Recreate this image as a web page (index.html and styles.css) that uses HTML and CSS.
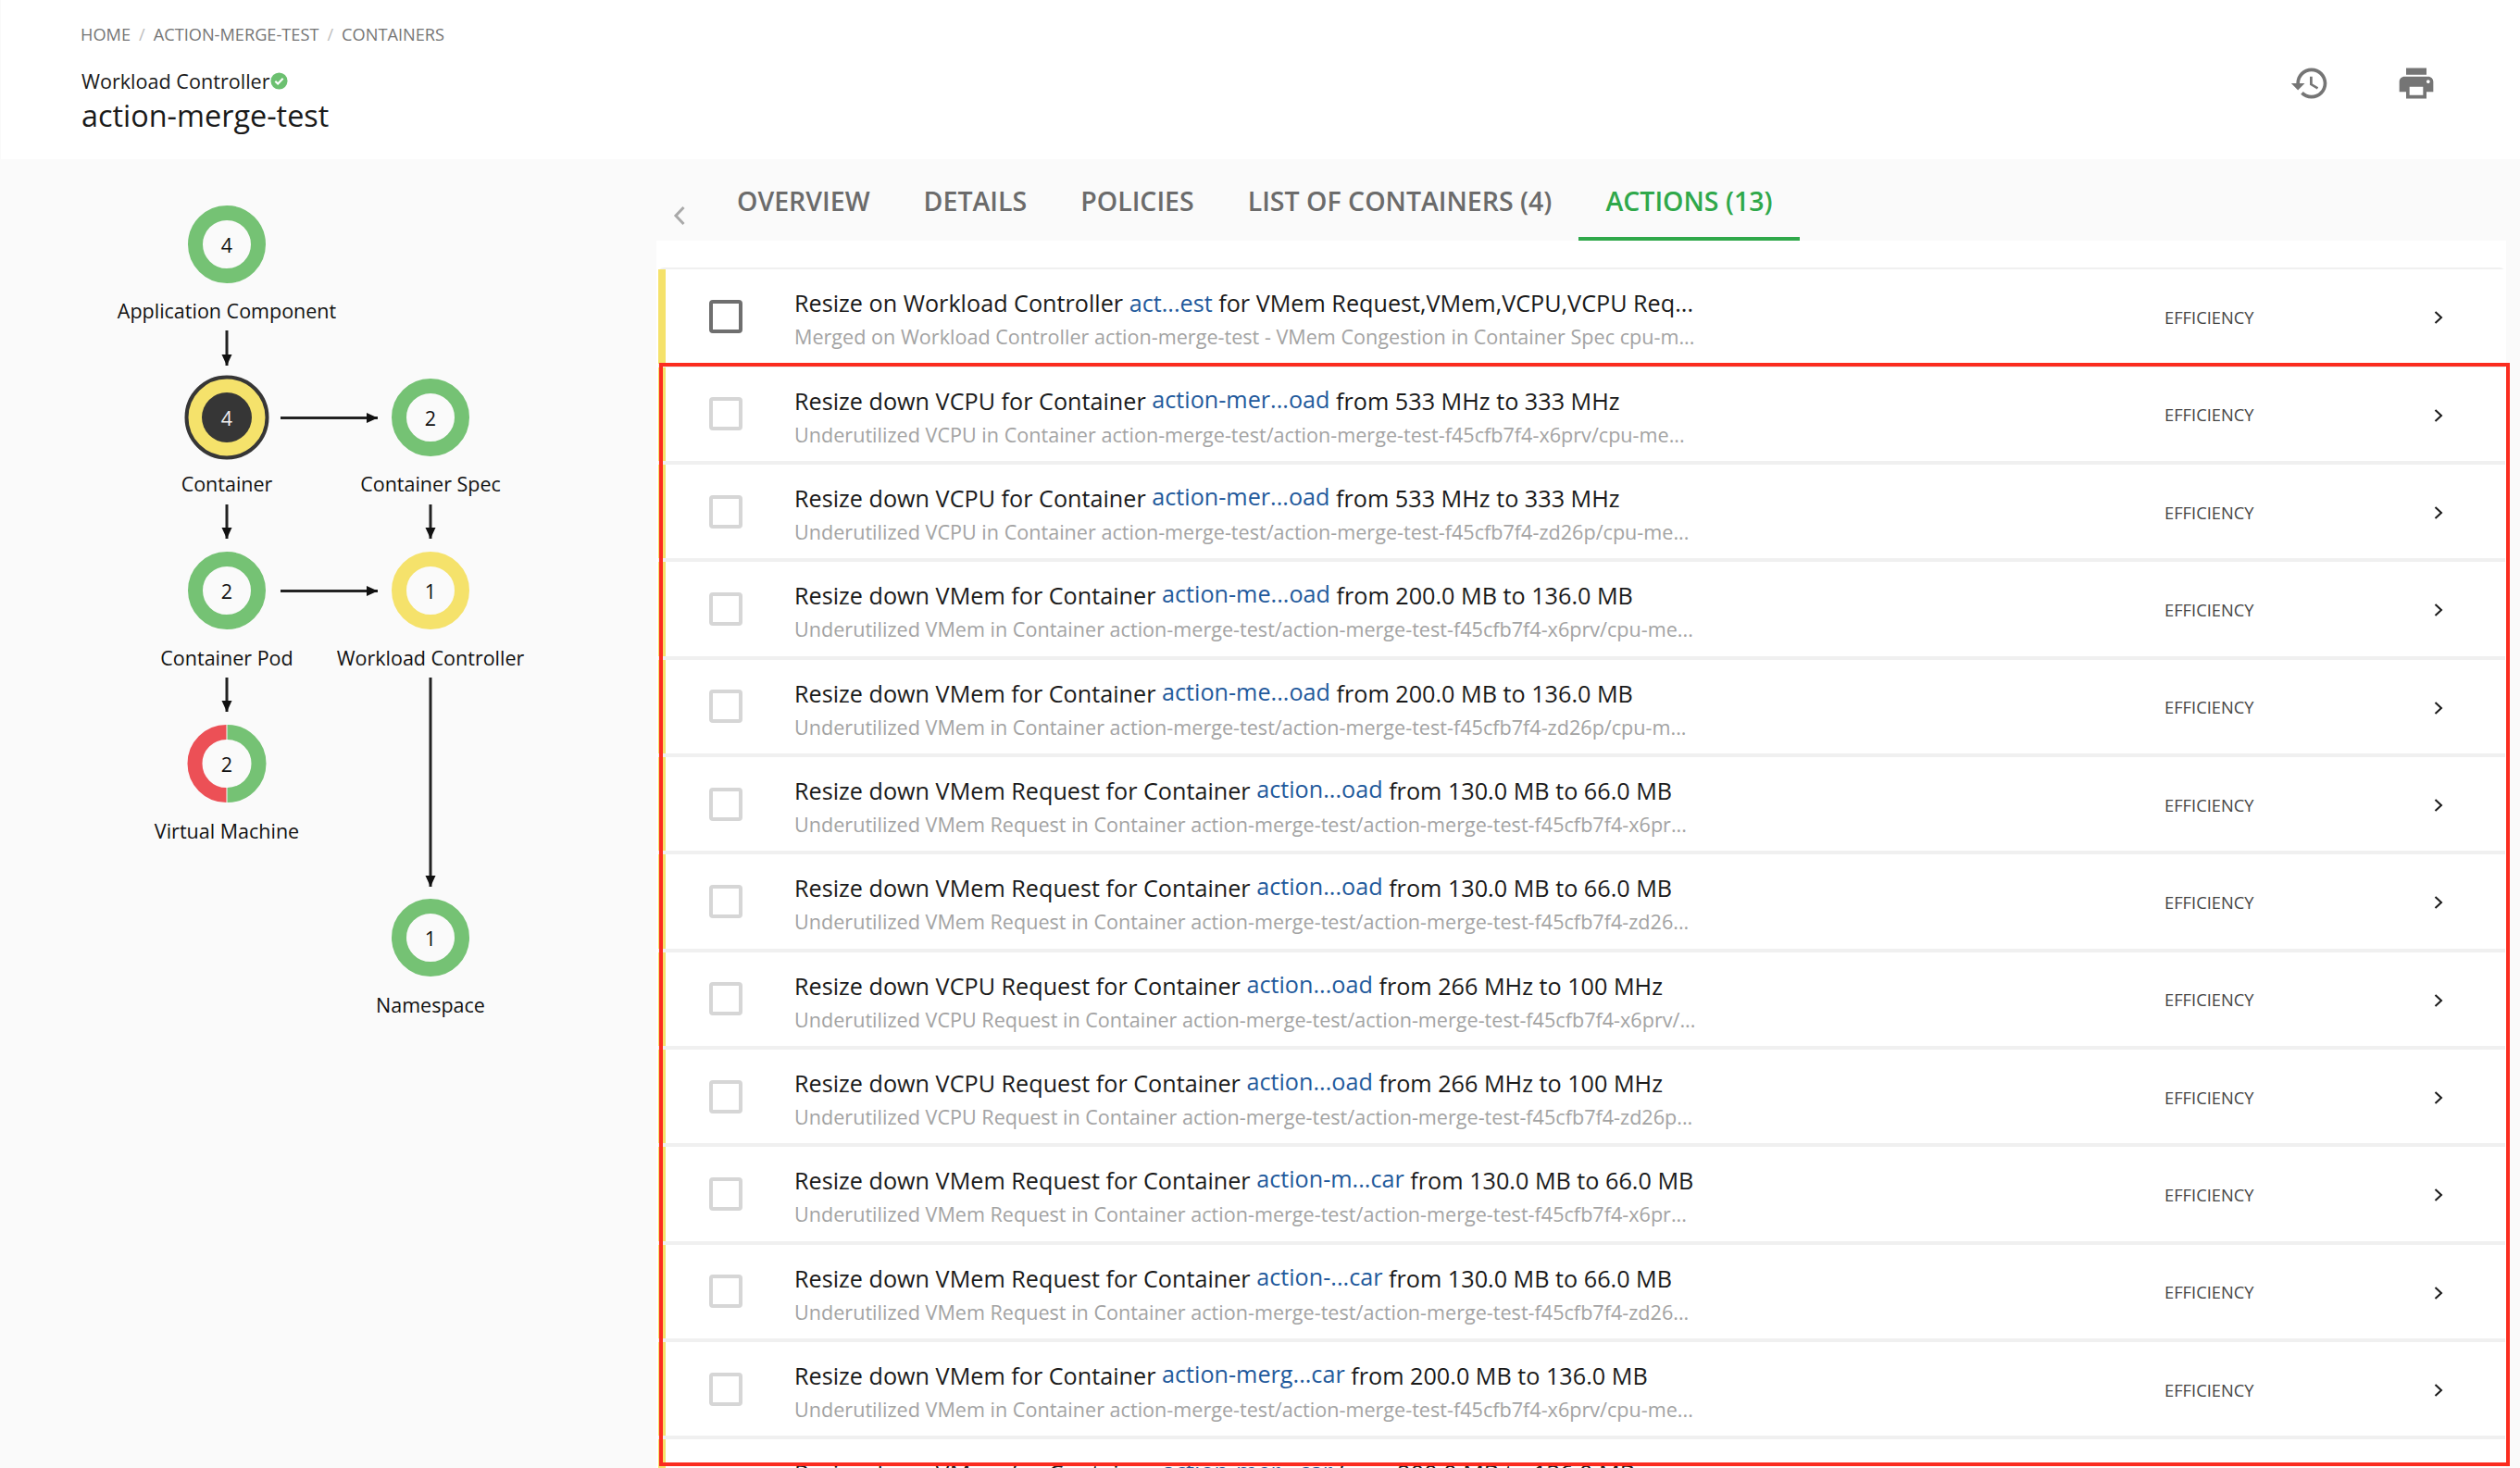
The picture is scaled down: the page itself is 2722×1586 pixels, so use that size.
FILE: index.html
```html
<!DOCTYPE html>
<html lang="en">
<head>
  <meta charset="UTF-8">
  <title>action-merge-test</title>
  <link rel="stylesheet" href="styles.css">
</head>
<body>
<header class="top">
  <div class="top-left">
    <nav class="crumbs">
      <a>HOME</a><span class="sep">/</span><a>ACTION-MERGE-TEST</a><span class="sep">/</span><a>CONTAINERS</a>
    </nav>
    <div class="type">Workload Controller<svg class="ok" viewBox="0 0 20 20"><circle cx="10" cy="10" r="9.5" fill="#6cc070"/><path d="M5.6 10.2l3 3 5.8-6" fill="none" stroke="#fff" stroke-width="2.2"/></svg></div>
    <h1 class="name">action-merge-test</h1>
  </div>
  <div class="top-icons">
    <svg class="icon" viewBox="0 0 24 24"><path d="M13 3c-4.97 0-9 4.03-9 9H1l3.89 3.89.07.14L9 12H6c0-3.87 3.13-7 7-7s7 3.13 7 7-3.13 7-7 7c-1.93 0-3.68-.79-4.94-2.06l-1.42 1.42C8.27 19.99 10.51 21 13 21c4.97 0 9-4.03 9-9s-4.03-9-9-9zm-1 5v5l4.28 2.54.72-1.21-3.5-2.08V8H12z"/></svg>
    <svg class="icon" viewBox="0 0 24 24"><path d="M19 8H5c-1.66 0-3 1.34-3 3v6h4v4h12v-4h4v-6c0-1.66-1.34-3-3-3zm-3 11H8v-5h8v5zm3-7c-.55 0-1-.45-1-1s.45-1 1-1 1 .45 1 1-.45 1-1 1zm-1-9H6v4h12V3z"/></svg>
  </div>
</header>

<div class="main">
  <aside class="side">
    <svg class="graph" width="710" height="1414" viewBox="0 172 710 1414">
      <defs>
        <marker id="head" viewBox="0 0 12 12" refX="12" refY="6" markerWidth="12" markerHeight="12" markerUnits="userSpaceOnUse" orient="auto">
          <path d="M0 0.5L12 6L0 11.5z" fill="#111"/>
        </marker>
      </defs>
      <g class="edges">
        <line x1="245" y1="357" x2="245" y2="395" marker-end="url(#head)"/>
        <line x1="303" y1="451.5" x2="408" y2="451.5" marker-end="url(#head)"/>
        <line x1="245" y1="545" x2="245" y2="582" marker-end="url(#head)"/>
        <line x1="465" y1="545" x2="465" y2="582" marker-end="url(#head)"/>
        <line x1="303" y1="638.5" x2="408" y2="638.5" marker-end="url(#head)"/>
        <line x1="245" y1="732" x2="245" y2="769" marker-end="url(#head)"/>
        <line x1="465" y1="732" x2="465" y2="958" marker-end="url(#head)"/>
      </g>
      <circle class="ring green" cx="245" cy="264" r="34"/>
      <text class="num" x="245" y="264">4</text>
      <text class="lbl" x="245" y="335">Application Component</text>

      <circle cx="245" cy="451" r="43.5" fill="#f5e26b" stroke="#363636" stroke-width="4"/>
      <circle cx="245" cy="451" r="27" fill="#363636"/>
      <text class="num light" x="245" y="451">4</text>
      <text class="lbl" x="245" y="522">Container</text>

      <circle class="ring green" cx="465" cy="451" r="34"/>
      <text class="num" x="465" y="451">2</text>
      <text class="lbl" x="465" y="522">Container Spec</text>

      <circle class="ring green" cx="245" cy="638" r="34"/>
      <text class="num" x="245" y="638">2</text>
      <text class="lbl" x="245" y="710">Container Pod</text>

      <circle class="ring yellow" cx="465" cy="638" r="34"/>
      <text class="num" x="465" y="638">1</text>
      <text class="lbl" x="465" y="710">Workload Controller</text>

      <path class="half red" d="M244.5 791A34 34 0 0 0 244.5 859"/>
      <path class="half green" d="M245.5 791A34 34 0 0 1 245.5 859"/>
      <text class="num" x="245" y="825">2</text>
      <text class="lbl" x="245" y="897">Virtual Machine</text>

      <circle class="ring green" cx="465" cy="1013" r="34"/>
      <text class="num" x="465" y="1013">1</text>
      <text class="lbl" x="465" y="1085">Namespace</text>
    </svg>
  </aside>

  <section class="content">
    <div class="tabs">
      <svg class="tab-back" viewBox="0 0 14 24"><path d="M11.5 3L3 12l8.5 9" fill="none" stroke="#a9a9a9" stroke-width="3"/></svg>
      <a class="tab">OVERVIEW</a>
      <a class="tab">DETAILS</a>
      <a class="tab">POLICIES</a>
      <a class="tab">LIST OF CONTAINERS (4)</a>
      <a class="tab active">ACTIONS (13)</a>
    </div>

    <div class="panel">
      <div class="list">
        <div class="row">
          <span class="check dark"></span>
          <div class="text">
            <div class="title">Resize on Workload Controller <a class="flat">act...est</a> for VMem Request,VMem,VCPU,VCPU Req...</div>
            <div class="sub">Merged on Workload Controller action-merge-test - VMem Congestion in Container Spec cpu-m...</div>
          </div>
          <span class="risk">EFFICIENCY</span>
          <svg class="more" viewBox="0 0 12 16"><path d="M2.5 2l6.5 6-6.5 6" /></svg>
        </div>
        <div class="row">
          <span class="check"></span>
          <div class="text">
            <div class="title">Resize down VCPU for Container <a>action-mer...oad</a> from 533 MHz to 333 MHz</div>
            <div class="sub">Underutilized VCPU in Container action-merge-test/action-merge-test-f45cfb7f4-x6prv/cpu-me...</div>
          </div>
          <span class="risk">EFFICIENCY</span>
          <svg class="more" viewBox="0 0 12 16"><path d="M2.5 2l6.5 6-6.5 6" /></svg>
        </div>
        <div class="row">
          <span class="check"></span>
          <div class="text">
            <div class="title">Resize down VCPU for Container <a>action-mer...oad</a> from 533 MHz to 333 MHz</div>
            <div class="sub">Underutilized VCPU in Container action-merge-test/action-merge-test-f45cfb7f4-zd26p/cpu-me...</div>
          </div>
          <span class="risk">EFFICIENCY</span>
          <svg class="more" viewBox="0 0 12 16"><path d="M2.5 2l6.5 6-6.5 6" /></svg>
        </div>
        <div class="row">
          <span class="check"></span>
          <div class="text">
            <div class="title">Resize down VMem for Container <a>action-me...oad</a> from 200.0 MB to 136.0 MB</div>
            <div class="sub">Underutilized VMem in Container action-merge-test/action-merge-test-f45cfb7f4-x6prv/cpu-me...</div>
          </div>
          <span class="risk">EFFICIENCY</span>
          <svg class="more" viewBox="0 0 12 16"><path d="M2.5 2l6.5 6-6.5 6" /></svg>
        </div>
        <div class="row">
          <span class="check"></span>
          <div class="text">
            <div class="title">Resize down VMem for Container <a>action-me...oad</a> from 200.0 MB to 136.0 MB</div>
            <div class="sub">Underutilized VMem in Container action-merge-test/action-merge-test-f45cfb7f4-zd26p/cpu-m...</div>
          </div>
          <span class="risk">EFFICIENCY</span>
          <svg class="more" viewBox="0 0 12 16"><path d="M2.5 2l6.5 6-6.5 6" /></svg>
        </div>
        <div class="row">
          <span class="check"></span>
          <div class="text">
            <div class="title">Resize down VMem Request for Container <a>action...oad</a> from 130.0 MB to 66.0 MB</div>
            <div class="sub">Underutilized VMem Request in Container action-merge-test/action-merge-test-f45cfb7f4-x6pr...</div>
          </div>
          <span class="risk">EFFICIENCY</span>
          <svg class="more" viewBox="0 0 12 16"><path d="M2.5 2l6.5 6-6.5 6" /></svg>
        </div>
        <div class="row">
          <span class="check"></span>
          <div class="text">
            <div class="title">Resize down VMem Request for Container <a>action...oad</a> from 130.0 MB to 66.0 MB</div>
            <div class="sub">Underutilized VMem Request in Container action-merge-test/action-merge-test-f45cfb7f4-zd26...</div>
          </div>
          <span class="risk">EFFICIENCY</span>
          <svg class="more" viewBox="0 0 12 16"><path d="M2.5 2l6.5 6-6.5 6" /></svg>
        </div>
        <div class="row">
          <span class="check"></span>
          <div class="text">
            <div class="title">Resize down VCPU Request for Container <a>action...oad</a> from 266 MHz to 100 MHz</div>
            <div class="sub">Underutilized VCPU Request in Container action-merge-test/action-merge-test-f45cfb7f4-x6prv/...</div>
          </div>
          <span class="risk">EFFICIENCY</span>
          <svg class="more" viewBox="0 0 12 16"><path d="M2.5 2l6.5 6-6.5 6" /></svg>
        </div>
        <div class="row">
          <span class="check"></span>
          <div class="text">
            <div class="title">Resize down VCPU Request for Container <a>action...oad</a> from 266 MHz to 100 MHz</div>
            <div class="sub">Underutilized VCPU Request in Container action-merge-test/action-merge-test-f45cfb7f4-zd26p...</div>
          </div>
          <span class="risk">EFFICIENCY</span>
          <svg class="more" viewBox="0 0 12 16"><path d="M2.5 2l6.5 6-6.5 6" /></svg>
        </div>
        <div class="row">
          <span class="check"></span>
          <div class="text">
            <div class="title">Resize down VMem Request for Container <a>action-m...car</a> from 130.0 MB to 66.0 MB</div>
            <div class="sub">Underutilized VMem Request in Container action-merge-test/action-merge-test-f45cfb7f4-x6pr...</div>
          </div>
          <span class="risk">EFFICIENCY</span>
          <svg class="more" viewBox="0 0 12 16"><path d="M2.5 2l6.5 6-6.5 6" /></svg>
        </div>
        <div class="row">
          <span class="check"></span>
          <div class="text">
            <div class="title">Resize down VMem Request for Container <a>action-...car</a> from 130.0 MB to 66.0 MB</div>
            <div class="sub">Underutilized VMem Request in Container action-merge-test/action-merge-test-f45cfb7f4-zd26...</div>
          </div>
          <span class="risk">EFFICIENCY</span>
          <svg class="more" viewBox="0 0 12 16"><path d="M2.5 2l6.5 6-6.5 6" /></svg>
        </div>
        <div class="row">
          <span class="check"></span>
          <div class="text">
            <div class="title">Resize down VMem for Container <a>action-merg...car</a> from 200.0 MB to 136.0 MB</div>
            <div class="sub">Underutilized VMem in Container action-merge-test/action-merge-test-f45cfb7f4-x6prv/cpu-me...</div>
          </div>
          <span class="risk">EFFICIENCY</span>
          <svg class="more" viewBox="0 0 12 16"><path d="M2.5 2l6.5 6-6.5 6" /></svg>
        </div>
        <div class="row">
          <span class="check"></span>
          <div class="text">
            <div class="title">Resize down VMem for Container <a>action-mer...car</a> from 200.0 MB to 136.0 MB</div>
            <div class="sub">Underutilized VMem in Container action-merge-test/action-merge-test-f45cfb7f4-zd26p/cpu-me...</div>
          </div>
          <span class="risk">EFFICIENCY</span>
          <svg class="more" viewBox="0 0 12 16"><path d="M2.5 2l6.5 6-6.5 6" /></svg>
        </div>
      </div>
    </div>
  </section>
</div>

<div class="marker"></div>
</body>
</html>
```

FILE: styles.css
```css
* {
  box-sizing: border-box;
}

html, body {
  width: 100%;
  height: 100%;
  overflow: hidden;
  margin: 0;
  padding: 0;
  background: #fafafa;
  color: #1a1a1a;
  font: 24px "Open Sans", sans-serif;
}

.top {
  display: flex;
  justify-content: space-between;
  height: 172px;
  margin-left: 1px;
  padding: 0 90px 0 86px;
  background: #fff;
}

.crumbs {
  display: flex;
  align-items: center;
  height: 26px;
  margin-top: 24px;
  font-size: 18.2px;
  color: #757575;
}

.crumbs .sep {
  margin: 0 9px;
  color: #bdbdbd;
}

.type {
  display: flex;
  align-items: center;
  height: 30px;
  margin-top: 22px;
  margin-left: 1px;
  font-size: 21.6px;
}

.ok {
  width: 19px;
  height: 19px;
}

.name {
  margin: 0 0 0 1px;
  font-size: 32.4px;
  font-weight: 400;
  line-height: 44px;
}

.top-icons {
  display: flex;
  gap: 71px;
  padding-top: 68px;
}

.icon {
  width: 44px;
  height: 44px;
  fill: #757575;
}

.main {
  display: flex;
}

.side {
  flex: none;
  width: 709px;
}

.graph {
  display: block;
}

.edges line {
  stroke: #222;
  stroke-width: 3;
}

.ring, .half {
  fill: none;
  stroke-width: 16;
}

.ring.green, .half.green {
  stroke: #75c274;
}

.ring.yellow {
  stroke: #f5e26b;
}

.half.red {
  stroke: #ec5056;
}

.num, .lbl {
  text-anchor: middle;
  dominant-baseline: central;
  font-family: "Open Sans", sans-serif;
  font-size: 21.5px;
  fill: #111;
}

.num.light {
  fill: #f0f0f0;
}

.content {
  flex: none;
  width: 1998px;
}

.tabs {
  display: flex;
  align-items: flex-start;
  height: 88px;
  padding-left: 18px;
}

.tab-back {
  width: 14px;
  height: 24px;
  margin-top: 49px;
  margin-right: 26px;
}

.tab {
  height: 88px;
  padding: 21px 29px 0;
  font-size: 28.5px;
  line-height: 48px;
  font-weight: 600;
  color: #6b6b6b;
  white-space: nowrap;
}

.tab.active {
  color: #2fa84a;
  border-bottom: 4px solid #2fa84a;
}

.panel {
  height: 1400px;
  padding: 29.33px 1px 0 2px;
  background: #fff;
}

.list {
  padding-top: 2px;
  background: #f0f0f0;
  border-radius: 6px 6px 0 0;
}

.row {
  display: flex;
  align-items: center;
  height: 101.33px;
  margin-bottom: 4px;
  padding-left: 47px;
  border-left: 8px solid #f5e26b;
  background: #fff;
}

.check {
  flex: none;
  width: 36px;
  height: 36px;
  border: 4px solid #d6d6d6;
  border-radius: 4px;
}

.check.dark {
  border-color: #6f6f6f;
}

.text {
  flex: none;
  width: 1536px;
  padding: 6px 0 0 56px;
}

.title {
  font-size: 25.2px;
  line-height: 36px;
  white-space: nowrap;
}

.title a {
  position: relative;
  top: -2px;
  color: #1f5a9c;
}

.title a.flat {
  top: 0;
}

.sub {
  margin-top: 3px;
  font-size: 21.6px;
  line-height: 32px;
  color: #a3a3a3;
  white-space: nowrap;
}

.risk {
  flex: none;
  width: 290px;
  margin-top: 1px;
  font-size: 18.3px;
  color: #444;
}

.more {
  flex: none;
  width: 12px;
  height: 16px;
  margin-top: 3px;
  fill: none;
  stroke: #1a1a1a;
  stroke-width: 2;
}

/* red selection drawn over the list */
.marker {
  position: absolute;
  left: 712px;
  top: 392px;
  width: 1999px;
  height: 1192px;
  border: 4px solid #fb2c1f;
  pointer-events: none;
}
```
